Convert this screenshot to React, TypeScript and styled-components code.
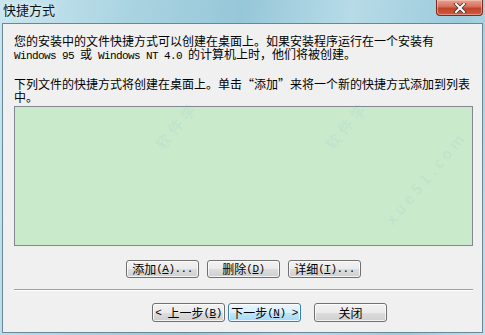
import React from "react";
import styled, { createGlobalStyle } from "styled-components";

const GlobalStyle = createGlobalStyle`
  html, body { margin: 0; padding: 0; }
  body { width: 485px; height: 335px; overflow: hidden; background: #b9dce9; }
  * { box-sizing: border-box; }
`;

const CJK = `"Noto Sans CJK SC", "Noto Sans", sans-serif`;

const Window = styled.div`
  position: relative;
  width: 485px;
  height: 335px;
  display: flex;
  flex-direction: column;
  padding: 0 2px 2px 2px;
  background: linear-gradient(100deg, #c9e6ef 0%, #a9d3e1 25%, #96c7d8 45%, #b7dbe7 65%, #9ccbdc 85%, #c0e0ea 100%);
  font-family: ${CJK};
  overflow: hidden;
`;

const TitleBar = styled.div`
  height: 23px;
  display: flex;
  justify-content: space-between;
  align-items: flex-start;
  flex: none;
`;

const Title = styled.div`
  padding: 2px 0 0 1px;
  font-size: 13px;
  line-height: 15px;
  color: #111;
  text-shadow: 0 0 6px rgba(255, 255, 255, 0.9);
`;

const CloseButton = styled.div`
  width: 47px;
  height: 16px;
  border: 1px solid #7a2a1e;
  border-top: none;
  border-radius: 0 0 4px 4px;
  background: linear-gradient(#e8a291 0%, #d5705a 45%, #c2432a 55%, #cf5a3e 100%);
  box-shadow: inset 0 0 0 1px rgba(255, 220, 210, 0.45);
  display: flex;
  align-items: center;
  justify-content: center;
`;

const Client = styled.div`
  flex: 1;
  border: 1px solid #6b8797;
  background: #f0f0f0;
  padding: 10px 0 0 11px;
  display: flex;
  flex-direction: column;
`;

const Para = styled.p<{ $top: number }>`
  margin: ${(p) => p.$top}px 0 0 0;
  width: 462px;
  font-size: 12px;
  line-height: 13px;
  color: #000;
  white-space: nowrap;
`;

const Latin = styled.span`
  font-family: "Liberation Mono", monospace;
  font-size: 11px;
  line-height: 11px;
  letter-spacing: -0.6px;
`;

const ListBox = styled.div`
  margin-top: 3px;
  width: 459px;
  height: 140px;
  border: 1px solid #828790;
  background: #c9ebcb;
`;

const ButtonRow = styled.div<{ $top: number; $left?: number }>`
  margin-top: ${(p) => p.$top}px;
  display: flex;
  justify-content: ${(p) => (p.$left ? "flex-start" : "center")};
  padding-left: ${(p) => (p.$left ? p.$left : 0)}px;
  padding-right: ${(p) => (p.$left ? 0 : 9)}px;
  gap: 8px;
`;

const Button = styled.div<{ $primary?: boolean; $h?: number; $ml?: number }>`
  width: 73px;
  height: ${(p) => p.$h ?? 18}px;
  margin-left: ${(p) => p.$ml ?? 0}px;
  border: 1px solid ${(p) => (p.$primary ? "#3c7fb1" : "#707070")};
  border-radius: 3px;
  background: ${(p) =>
    p.$primary
      ? "linear-gradient(#eaf6fd 0%, #d9f0fc 50%, #bee6fd 51%, #a7d9f5 100%)"
      : "linear-gradient(#f2f2f2 0%, #ebebeb 50%, #dddddd 51%, #cfcfcf 100%)"};
  box-shadow: inset 0 0 0 1px rgba(255, 255, 255, 0.75);
  display: flex;
  align-items: center;
  justify-content: center;
  font-size: 12px;
  line-height: 12px;
  color: #000;
  white-space: pre;
`;

const Key = styled.span`
  font-family: "Liberation Mono", monospace;
  font-size: 11px;
  letter-spacing: -0.5px;
`;

const U = styled.span`
  text-decoration: underline;
`;

const Separator = styled.div`
  margin-top: 11px;
  width: 459px;
  height: 2px;
  border-top: 1px solid #a0a0a0;
  border-bottom: 1px solid #ffffff;
`;

const Watermark = styled.div<{ $x: number; $y: number }>`
  position: absolute;
  left: ${(p) => p.$x}px;
  top: ${(p) => p.$y}px;
  transform: rotate(-50deg);
  transform-origin: left top;
  font-size: 15px;
  font-weight: bold;
  color: rgba(110, 170, 215, 0.1);
  white-space: nowrap;
  pointer-events: none;
  letter-spacing: 4px;
`;

const CloseX = () => (
  <svg width="14" height="10" viewBox="0 0 14 10">
    <path d="M3 1 L11 9 M11 1 L3 9" stroke="#3a3a3a" strokeWidth="3.6" strokeLinecap="square" />
    <path d="M3 1 L11 9 M11 1 L3 9" stroke="#ffffff" strokeWidth="2" strokeLinecap="square" />
  </svg>
);

const Label = ({ cn, k, tail = "", pre = "", post = "" }: { cn: string; k: string; tail?: string; pre?: string; post?: string }) => (
  <>
    {pre && <Key>{pre}</Key>}
    {cn}
    <Key>
      (<U>{k}</U>){tail}
    </Key>
    {post && <Key>{post}</Key>}
  </>
);

export default function App() {
  return (
    <>
      <GlobalStyle />
      <Window lang="zh-CN">
        <TitleBar>
          <Title>快捷方式</Title>
          <CloseButton>
            <CloseX />
          </CloseButton>
        </TitleBar>
        <Client>
          <Para $top={0}>
            您的安装中的文件快捷方式可以创建在桌面上。如果安装程序运行在一个安装有
            <br />
            <Latin>Windows 95 </Latin>或<Latin> Windows NT 4.0 </Latin>的计算机上时，他们将被创建。
          </Para>
          <Para $top={15}>
            下列文件的快捷方式将创建在桌面上。单击“添加”来将一个新的快捷方式添加到列表
            <br />
            中。
          </Para>
          <ListBox />
          <ButtonRow $top={14}>
            <Button>
              <Label cn="添加" k="A" tail="..." />
            </Button>
            <Button>
              <Label cn="删除" k="D" />
            </Button>
            <Button>
              <Label cn="详细" k="T" tail="..." />
            </Button>
          </ButtonRow>
          <Separator />
          <ButtonRow $top={12} $left={138}>
            <Button $h={19}>
              <Label pre="< " cn="上一步" k="B" />
            </Button>
            <Button $h={19} $primary $ml={-5}>
              <Label cn="下一步" k="N" post=" >" />
            </Button>
            <Button $h={19} $ml={5}>
              关闭
            </Button>
          </ButtonRow>
        </Client>
        <Watermark $x={150} $y={140}>软件学</Watermark>
        <Watermark $x={320} $y={140}>软件学</Watermark>
        <Watermark $x={380} $y={215}>xue51.com</Watermark>
      </Window>
    </>
  );
}
